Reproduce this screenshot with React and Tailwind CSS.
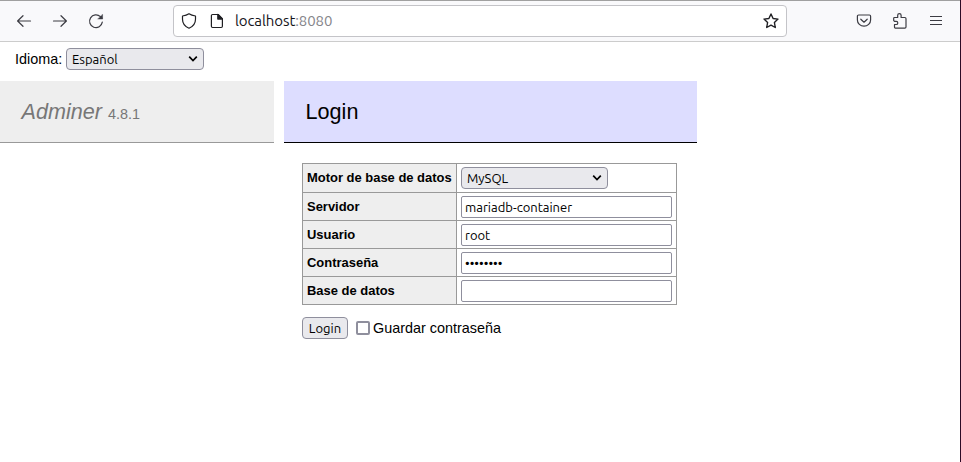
import React from 'react';

const uiFont = "font-['Ubuntu','Noto_Sans',sans-serif]";

function Icon({ children, className = '' }) {
  return (
    <svg
      viewBox="0 0 16 16"
      className={`block size-4 shrink-0 ${className}`}
      fill="none"
      stroke="currentColor"
      strokeWidth="1.2"
      strokeLinecap="round"
      strokeLinejoin="round"
    >
      {children}
    </svg>
  );
}

function Toolbar() {
  return (
    <header className="flex h-[42px] items-center border-t border-b border-t-[#a0a0a0] border-b-[#cccccc] bg-[#f9f9fb] text-[#3c3c43]">
      <Icon className="ml-4">
        <path d="M14.5 8H1.8M7 2.7 1.6 8 7 13.3" />
      </Icon>
      <Icon className="ml-5">
        <path d="M1.5 8h12.7M9 2.7 14.4 8 9 13.3" />
      </Icon>
      <Icon className="ml-5">
        <path d="M14.3 9.2A6.4 6.4 0 1 1 12.4 3.6L14 5.2" />
        <path d="M14.6 1.5v4.6H10z" fill="currentColor" strokeWidth="0.4" />
      </Icon>
      <div className="ml-[69px] flex h-8 w-[614px] items-center rounded border border-[#c4c4c8] bg-white text-[#1f1f23]">
        <Icon className="ml-[7px]">
          <path d="M8 .8C6.3 2 4.2 2.7 1.5 3v3.2c0 4 2.3 7.2 6.5 9 4.200-1.800 6.500-5 6.500-9V3C11.800 2.700 9.700 2 8 .8z" />
        </Icon>
        <Icon className="ml-3">
          <path d="M3.600 1.500h5.600l4.200 4.200v7.600a1.200 1.200 0 0 1-1.200 1.200H3.600a1.200 1.200 0 0 1-1.200-1.200V2.700a1.200 1.200 0 0 1 1.200-1.200z" />
          <path d="M8.800 1.500v4.600h4.600z" fill="currentColor" />
        </Icon>
        <span className={`${uiFont} ml-[10px] text-[15px] leading-5 tracking-[-0.09px] text-[#15141a]`}>
          localhost<span className="text-[#85858a]">:8080</span>
        </span>
        <Icon className="mr-[7px] ml-auto">
          <path d="m8 1 2.100 4.500 4.900.6-3.600 3.400.9 5L8 12.100l-4.300 2.400.9-5L1 6.100l4.900-.6z" strokeWidth="1.400" />
        </Icon>
      </div>
      <Icon className="ml-[69px]">
        <path d="M2.600 2h10.800a1.200 1.200 0 0 1 1.200 1.200v3.700a6.600 6.300 0 0 1-13.200 0V3.200A1.200 1.200 0 0 1 2.600 2z" />
        <path d="M4.800 6.200 8 9.200l3.200-3" />
      </Icon>
      <Icon className="ml-5">
        <path d="M2.500 4.500h3.200V2.300a1.700 1.700 0 0 1 3.400 0v2.200h3.700a1.200 1.200 0 0 1 1.200 1.200v8.200a1.200 1.200 0 0 1-1.200 1.200H3.700a1.200 1.200 0 0 1-1.200-1.200v-2.400h1.700a1.600 1.600 0 0 0 0-3.200H2.500L1.700 7.500V5.300a.8.8 0 0 1 .8-.8z" />
      </Icon>
      <Icon className="ml-5">
        <path d="M2 3.500h12M2 7.500h12M2 11.500h12" strokeLinecap="butt" />
      </Icon>
    </header>
  );
}

function Select({ value, className = '' }) {
  return (
    <div className={`grid h-[22px] items-center ${className}`}>
      <select
        className={`${uiFont} col-start-1 row-start-1 h-[22px] w-full appearance-none rounded border border-[#8f8f9d] bg-[#e9e9ed] pb-px pl-[5px] text-[13px] leading-5 text-black`}
      >
        <option>{value}</option>
      </select>
      <svg
        viewBox="0 0 10 6"
        className="pointer-events-none col-start-1 row-start-1 mr-[6px] h-[6px] w-[10px] justify-self-end"
        fill="none"
        stroke="#000"
        strokeWidth="1.700"
      >
        <path d="m1.200.7 3.800 3.800L8.800.7" />
      </svg>
    </div>
  );
}

const fields = [
  { label: 'Servidor', value: 'mariadb-container' },
  { label: 'Usuario', value: 'root' },
  { label: 'Contraseña', value: '••••••••', dots: true },
  { label: 'Base de datos', value: '' },
];

function Row({ label, tall, children }) {
  return (
    <div className={`flex border-b border-[#999999] ${tall ? 'h-[29px]' : 'h-7'}`}>
      <div className="flex w-[154px] shrink-0 items-center border-r border-[#999999] bg-[#eeeeee] pl-1 text-[12.96px] font-bold whitespace-nowrap">
        {label}
      </div>
      <div className="flex grow items-center pl-1">{children}</div>
    </div>
  );
}

export default function App() {
  return (
    <div className="h-[462px] w-[961px] overflow-hidden border-r border-[#2c0a26] bg-white font-['Liberation_Sans',Arial,sans-serif] text-[14.4px] text-black">
      <Toolbar />
      <div className="flex h-[39px] items-start pt-[6px] pl-[15px]">
        <span className="w-[51px] leading-[22px]">Idioma:</span>
        <Select value="Español" className="w-[138px]" />
      </div>
      <div className="flex items-start gap-[10px]">
        <h1 className="h-[62px] w-[274px] border-b border-[#999999] bg-[#eeeeee] pl-[21.600px] text-[21.600px] leading-[61px] text-[#777777]">
          <span className="italic">Adminer</span> <span className="text-[14.400px]">4.8.1</span>
        </h1>
        <main className="w-[413px]">
          <h2 className="h-[62px] border-b border-black bg-[#ddddff] pl-[21.600px] text-[21.600px] leading-[61px]">Login</h2>
          <form className="pt-5 pl-[18px]">
            <div className="w-[375px] border-t border-r border-l border-[#999999]">
              <Row label="Motor de base de datos" tall>
                <Select value="MySQL" className="w-[147px]" />
              </Row>
              {fields.map((f) => (
                <Row key={f.label} label={f.label}>
                  <input
                    readOnly
                    defaultValue={f.value}
                    className={`${uiFont} h-[22px] w-[211px] rounded-xs border border-[#8f8f9d] bg-white px-[3px] text-[13px] text-black ${f.dots ? 'tracking-[0px]' : ''}`}
                  />
                </Row>
              ))}
            </div>
            <div className="flex h-[22px] items-center mt-3">
              <button
                type="button"
                className={`${uiFont} h-[22px] w-[46px] rounded border border-[#8f8f9d] bg-[#e9e9ed] text-[13px] leading-5`}
              >
                Login
              </button>
              <label className="ml-2 flex items-center gap-[3px]">
                <input type="checkbox" className="size-[14px] appearance-none rounded-xs border-2 border-[#8f8f9d] bg-white" />
                <span className="-mt-px leading-[20px]">Guardar contraseña</span>
              </label>
            </div>
          </form>
        </main>
      </div>
    </div>
  );
}
